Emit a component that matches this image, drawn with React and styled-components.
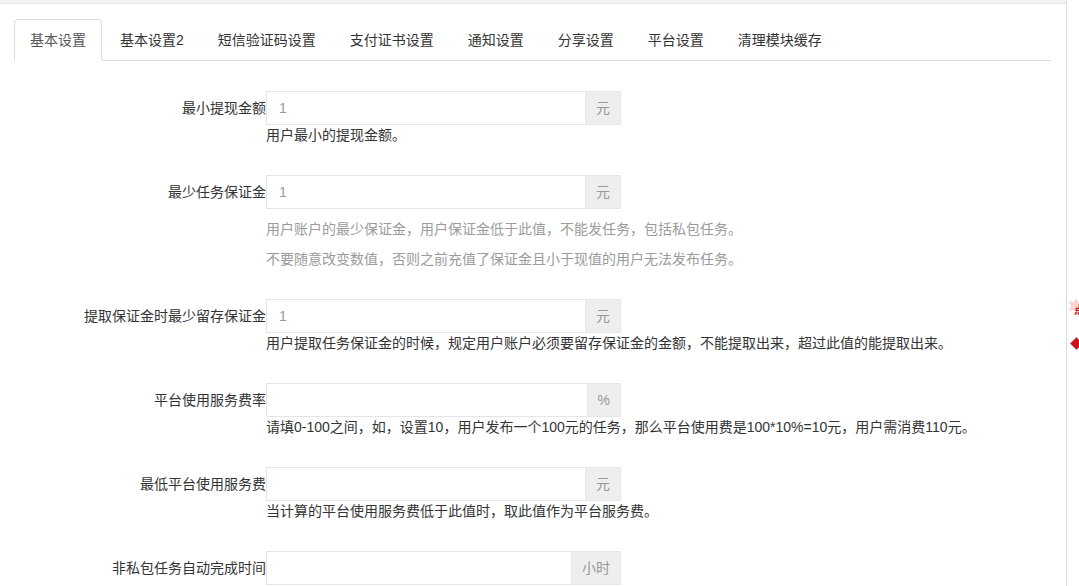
import React from "react";
import styled, { createGlobalStyle } from "styled-components";

const Global = createGlobalStyle`
  html, body { margin: 0; padding: 0; background: #fff; overflow: hidden; }
  body {
    font-family: "Liberation Sans", "Noto Sans CJK SC", sans-serif;
    font-size: 14px;
    color: #333;
  }
  * { box-sizing: border-box; }
`;

const Page = styled.div`
  display: flex;
  height: 586px;
  overflow: hidden;
`;

const Main = styled.div`
  width: 1067px;
  flex-shrink: 0;
  border-right: 1px solid #dcdcdc;
`;

const TopStrip = styled.div`
  height: 4px;
  background: #f3f3f4;
  border-bottom: 1px solid #e4e4e4;
`;

const Content = styled.div`
  padding: 15px 15px 0 14px;
`;

const Tabs = styled.ul`
  display: flex;
  list-style: none;
  margin: 0;
  padding: 0;
  border-bottom: 1px solid #ddd;
`;

const Tab = styled.li`
  margin: 0 2px -1px 0;
  padding: 10px 15px;
  line-height: 20px;
  font-size: 14px;
  border: 1px solid ${(p) => (p.$active ? "#ddd" : "transparent")};
  border-bottom-color: ${(p) => (p.$active ? "#fff" : "transparent")};
  border-radius: 4px 4px 0 0;
  background: ${(p) => (p.$active ? "#fff" : "transparent")};
  color: ${(p) => (p.$active ? "#555" : "#333")};
  white-space: nowrap;
`;

const Form = styled.div`
  padding-top: 30px;
`;

const Row = styled.div`
  display: grid;
  grid-template-columns: 252px auto;
  margin-bottom: 30px;
`;

const Label = styled.div`
  text-align: right;
  line-height: 34px;
  height: 34px;
  font-size: 14px;
  color: #333;
  white-space: nowrap;
`;

const Control = styled.div`
  display: flex;
  flex-direction: column;
`;

const InputGroup = styled.div`
  display: flex;
  width: 355px;
  height: 34px;
`;

const Input = styled.div`
  flex: 1;
  border: 1px solid #e5e6e7;
  border-right: none;
  padding: 0 12px;
  line-height: 32px;
  color: #999;
  font-size: 14px;
`;

const Addon = styled.div`
  border: 1px solid #e5e6e7;
  background: #eee;
  color: #999;
  padding: 0 10px;
  line-height: 32px;
  font-size: 14px;
  text-align: center;
  white-space: nowrap;
`;

const Help = styled.div`
  line-height: 20px;
  font-size: 14px;
  white-space: nowrap;
  color: ${(p) => (p.$muted ? "#9b9b9b" : "#333")};
  margin-top: ${(p) => (p.$muted ? "10px" : "0")};
`;

const Side = styled.div`
  position: relative;
  flex: 1;
`;

const Badge = styled.div`
  position: absolute;
  left: 2px;
  top: 298px;
`;

const BadgeText = styled.span`
  position: absolute;
  left: 5px;
  top: 3px;
  font-size: 11px;
  font-weight: bold;
  color: #c8101a;
  font-family: "Noto Sans CJK SC", sans-serif;
`;

const Diamond = styled.div`
  position: absolute;
  left: 5px;
  top: 339px;
  width: 9px;
  height: 9px;
  background: #d0111b;
  transform: rotate(45deg);
`;

const tabs = ["基本设置", "基本设置2", "短信验证码设置", "支付证书设置", "通知设置", "分享设置", "平台设置", "清理模块缓存"];

const fields = [
  { label: "最小提现金额", value: "1", unit: "元", help: ["用户最小的提现金额。"] },
  {
    label: "最少任务保证金",
    value: "1",
    unit: "元",
    muted: true,
    help: [
      "用户账户的最少保证金，用户保证金低于此值，不能发任务，包括私包任务。",
      "不要随意改变数值，否则之前充值了保证金且小于现值的用户无法发布任务。",
    ],
  },
  {
    label: "提取保证金时最少留存保证金",
    value: "1",
    unit: "元",
    help: ["用户提取任务保证金的时候，规定用户账户必须要留存保证金的金额，不能提取出来，超过此值的能提取出来。"],
  },
  {
    label: "平台使用服务费率",
    value: "",
    unit: "%",
    help: ["请填0-100之间，如，设置10，用户发布一个100元的任务，那么平台使用费是100*10%=10元，用户需消费110元。"],
  },
  { label: "最低平台使用服务费", value: "", unit: "元", help: ["当计算的平台使用服务费低于此值时，取此值作为平台服务费。"] },
  { label: "非私包任务自动完成时间", value: "", unit: "小时", help: [] },
];

export default function App() {
  return (
    <>
      <Global />
      <Page>
        <Main>
          <TopStrip />
          <Content>
            <Tabs>
              {tabs.map((t, i) => (
                <Tab key={t} $active={i === 0}>
                  {t}
                </Tab>
              ))}
            </Tabs>
            <Form>
              {fields.map((f) => (
                <Row key={f.label}>
                  <Label>{f.label}</Label>
                  <Control>
                    <InputGroup>
                      <Input>{f.value}</Input>
                      <Addon>{f.unit}</Addon>
                    </InputGroup>
                    {f.help.map((h) => (
                      <Help key={h} $muted={f.muted}>
                        {h}
                      </Help>
                    ))}
                  </Control>
                </Row>
              ))}
            </Form>
          </Content>
        </Main>
        <Side>
          <Badge>
            <svg width="14" height="24" viewBox="0 0 14 24">
              <path d="M7 0 L9 4 L14 3 L12 8 L14 13 L9 12 L7 17 L5 12 L0 13 L2 8 L0 3 L5 4 Z" fill="#fbd4d6" />
            </svg>
            <BadgeText>点</BadgeText>
          </Badge>
          <Diamond />
        </Side>
      </Page>
    </>
  );
}
